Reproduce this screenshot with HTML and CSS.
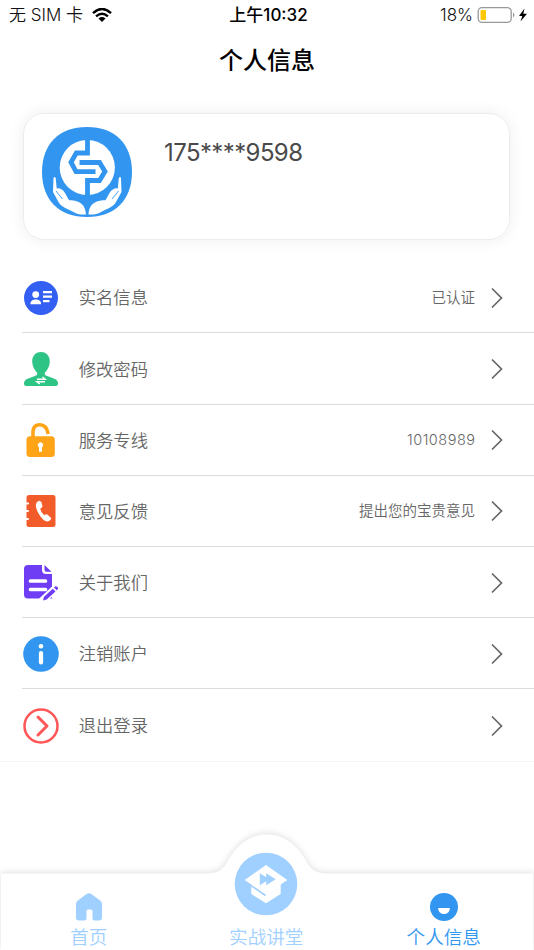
FILE: index.html
```html
<!DOCTYPE html>
<html lang="zh-CN">
<head>
  <meta charset="UTF-8">
  <meta name="viewport" content="width=device-width, initial-scale=1.0">
  <title>个人信息</title>
  <link rel="stylesheet" href="styles.css">
</head>
<body>
  <div class="status-bar">
    <div class="status-left">
      <span>无 SIM 卡</span>
      <svg class="wifi" viewBox="0 0 20 14">
        <path d="M1 5.1Q10-3.1 19 5.1M4.1 8.4q5.9-5.2 11.8 0" fill="none" stroke="#000" stroke-width="2.5"/>
        <path d="M6.5 10.5q3.5-2.8 7 0L10 14z"/>
      </svg>
    </div>
    <div class="status-time">上午10:32</div>
    <div class="status-right">
      <span>18%</span>
      <svg class="battery" viewBox="0 0 50 16">
        <rect x=".7" y=".7" width="33" height="14.6" rx="3.8" fill="#fff" stroke="#999" stroke-width="1.3"/>
        <rect x="3" y="3" width="5.5" height="10" rx="1" fill="#ffc800"/>
        <path d="M35.5 5.5q3 2.5 0 5z" fill="#999"/>
        <path d="M47 1.5l-5.5 7.5h3.3l-1.8 5.5 6.5-7.8h-3.7z"/>
      </svg>
    </div>
  </div>

  <h1>个人信息</h1>

  <section class="card">
    <svg class="logo" viewBox="0 0 90 90">
      <path d="M45 0C73 0 90 17 90 45S73 90 45 90 0 73 0 45 17 0 45 0z" fill="#3296f0"/>
      <circle cx="45.3" cy="40.5" r="27.6" fill="#fff"/>
      <path d="M45.5 12v14H34.3L29 35.2l5 9.500H53.5M45.5 69V53.5H57.5L63 44.500 57.5 35.5H37.5" fill="none" stroke="#3296f0" stroke-width="4.8"/>
      <g id="hand" fill="#fff">
        <path d="M11.5 51q.7-2 2.200 0l1 10.500q4.500-1 8.300 4.500l4 7.300c7 0 16.500 1.700 17 14.200-5 .3-9-.2-12.500-2.500-5-3-12-4.500-15-10l-5.500-10z"/>
        <path d="M14 64l6.500 8" fill="none" stroke="#3296f0" stroke-width=".9"/>
      </g>
      <use href="#hand" transform="translate(90.5) scale(-1 1)"/>
    </svg>
    <span class="phone">175****9598</span>
  </section>

  <ul class="menu">
    <li>
      <svg class="icon" viewBox="0 0 36 36">
        <circle cx="18" cy="18" r="17" fill="#335ff2"/>
        <g fill="#fff">
          <circle cx="12.7" cy="14.6" r="3.4"/>
          <path d="M7.5 24.3v-1c0-5.2 10.5-5.2 10.5 0v1z"/>
          <path d="M20 11h9v2.2h-9zM20 15.5h9v2.2h-9zM20 20h6.5v2.2H20z"/>
        </g>
      </svg>
      <span class="label">实名信息</span>
      <span class="value">已认证</span>
      <svg class="arrow" viewBox="0 0 12 22"><path d="M1 1.5L10.5 11 1 20.5"/></svg>
    </li>
    <li>
      <svg class="icon" viewBox="0 0 36 36">
        <path d="M18 1c6 0 9 4.500 8.800 10-.2 4.500-2.500 8-4.800 10.500-.8 1.800 0 2.500 1.500 3.200L32 28q3 1.500 3 4.500 0 2.500-2.500 2.500h-29Q1 35 1 32.500 1 29.500 4 28l8.500-3.300c1.500-.7 2.300-1.400 1.500-3.200-2.300-2.500-4.600-6-4.800-10.500C9 5.500 12 1 18 1z" fill="#2ec486"/>
        <path d="M14 28.200h8L19.500 26M22 30.800h-8l2.700 2.200" fill="none" stroke="#fff" stroke-width="1.5"/>
      </svg>
      <span class="label">修改密码</span>
      <svg class="arrow" viewBox="0 0 12 22"><path d="M1 1.5L10.5 11 1 20.5"/></svg>
    </li>
    <li>
      <svg class="icon" viewBox="0 0 36 36">
        <path d="M10 16V9.500Q10.500 2.800 17 2.800T25.200 12" fill="none" stroke="#ffa417" stroke-width="3.6"/>
        <rect x="3.5" y="14.3" width="28.3" height="20.7" rx="3.5" fill="#ffa417"/>
        <path d="M15.200 24.500a2.700 2.700 0 1 1 4.600 0l-.8 1v4.300h-3v-4.300z" fill="#fff"/>
      </svg>
      <span class="label">服务专线</span>
      <span class="value number">10108989</span>
      <svg class="arrow" viewBox="0 0 12 22"><path d="M1 1.5L10.5 11 1 20.5"/></svg>
    </li>
    <li>
      <svg class="icon" viewBox="0 0 36 36">
        <rect x="3.5" y="2" width="29" height="32" rx="2.5" fill="#f25c2a"/>
        <path d="M2.500 10.500h2.500M2.500 18h2.500M2.500 26h2.500" stroke="#fff" stroke-width="2" stroke-linecap="round"/>
        <path d="M13.500 9.700q3-3.700 5-.2l1 3.500q0 1.500-2.300 2.700.8 4 4 6.600 2.300-2 4 0l2.600 2.400q1.200 2-2.300 3.600-4.700 1-9.500-7-4.500-7.500-2.500-11.600z" fill="#fff"/>
      </svg>
      <span class="label">意见反馈</span>
      <span class="value">提出您的宝贵意见</span>
      <svg class="arrow" viewBox="0 0 12 22"><path d="M1 1.5L10.5 11 1 20.5"/></svg>
    </li>
    <li>
      <svg class="icon" viewBox="0 0 36 36">
        <path d="M5 0h14v5.5Q19.500 9 23 9h6v24.500H5Q1 33.500 1 29.500V4Q1 0 5 0zM21.500 0L28.500 6.800h-5q-2 0-2-2z" fill="#6f3df4"/>
        <path d="M7.500 16h15M7.500 24.500h15" stroke="#fff" stroke-width="3.7" stroke-linecap="round"/>
        <path d="M18 37L34 22" stroke="#fff" stroke-width="7.5"/>
        <path d="M20 35.500l1-3.800 8.800-8 2.700 2.800-8.800 8zM31 22.500l1.500-1.300q2.800.2 2.500 2.800l-1.400 1.300z" fill="#6f3df4"/>
      </svg>
      <span class="label">关于我们</span>
      <svg class="arrow" viewBox="0 0 12 22"><path d="M1 1.5L10.5 11 1 20.5"/></svg>
    </li>
    <li>
      <svg class="icon" viewBox="0 0 36 36">
        <circle cx="18" cy="18" r="17.8" fill="#3296f0"/>
        <circle cx="18" cy="10.2" r="2.3" fill="#fff"/>
        <path d="M18 17v9.500" stroke="#fff" stroke-width="4.2" stroke-linecap="round"/>
      </svg>
      <span class="label">注销账户</span>
      <svg class="arrow" viewBox="0 0 12 22"><path d="M1 1.5L10.5 11 1 20.5"/></svg>
    </li>
    <li>
      <svg class="icon" viewBox="0 0 36 36">
        <circle cx="18" cy="18" r="16.5" fill="none" stroke="#ff5757" stroke-width="2.5"/>
        <path d="M15 9l9 9-9 9" fill="none" stroke="#ff5757" stroke-width="3" stroke-linecap="round" stroke-linejoin="round"/>
      </svg>
      <span class="label">退出登录</span>
      <svg class="arrow" viewBox="0 0 12 22"><path d="M1 1.5L10.5 11 1 20.5"/></svg>
    </li>
  </ul>

  <nav class="tabbar">
    <svg class="tabbar-bg" viewBox="0 0 534 130">
      <path d="M1 53.500H207c10 0 15-3.500 19-9.500C238 22 252 14.500 267 14.500S296 22 308 44c4 6 9 9.500 19 9.500H533V140H1z"/>
    </svg>
    <a class="tab">
      <svg class="tab-home" viewBox="0 0 28 28">
        <path d="M12 .8q2-1.300 4 0l9.500 7Q27 9 27 11v13.500q0 3-3 3h-4.500q-2 0-2-2V18q0-1.500-1.500-1.500h-3q-1.500 0-1.500 1.500v7.500q0 2-2 2H4q-3 0-3-3V11Q1 9 2.500 7.800z" fill="#a0d0ff"/>
      </svg>
      <span>首页</span>
    </a>
    <a class="tab">
      <svg class="tab-course" viewBox="0 0 64 64">
        <circle cx="32" cy="32" r="31.3" fill="#a0d0ff"/>
        <path d="M32 13L53.300 28 46.700 32.500V42L32 51.300 17.300 42v-9.500L10.700 28z" fill="#fff"/>
        <path d="M16 32.800L31.500 43.500" stroke="#a0d0ff" stroke-width="1.6"/>
        <path d="M25.800 21.300l6.400 4v-4l9.500 6-9.500 6v-4l-6.400 4z" fill="#a0d0ff"/>
      </svg>
      <span>实战讲堂</span>
    </a>
    <a class="tab active">
      <svg class="tab-user" viewBox="0 0 28 28">
        <circle cx="14" cy="14" r="14" fill="#3296f0"/>
        <path d="M8.200 15h11.600c0 8-11.600 8-11.600 0z" fill="#fff"/>
      </svg>
      <span>个人信息</span>
    </a>
  </nav>
</body>
</html>
```
FILE: styles.css
```css
* {
  box-sizing: border-box;
}

body {
  margin: 0;
  height: 950px;
  display: flex;
  flex-direction: column;
  overflow: hidden;
  background-color: #fff;
  color: #666;
  font-family: Inter, "Noto Sans CJK SC", sans-serif;
}

svg {
  display: block;
  flex: none;
}

/* Status bar */
.status-bar {
  height: 30px;
  display: grid;
  grid-template-columns: 1fr auto 1fr;
  align-items: center;
  padding: 0 6px 0 9px;
  color: #111;
  font-size: 17px;
  font-weight: 350;
  line-height: 30px;
}

.status-left,
.status-right {
  display: flex;
  align-items: center;
}

.status-left {
  gap: 9px;
}

.status-right {
  justify-content: flex-end;
  gap: 4px;
}

.status-time {
  color: #000;
  font-weight: 500;
}

.wifi {
  width: 20px;
  height: 14px;
}

.battery {
  width: 51px;
  height: 16px;
}

h1 {
  margin: 0;
  padding-top: 1px;
  height: 61px;
  line-height: 60px;
  text-align: center;
  font-size: 24px;
  font-weight: 500;
  color: #000;
}

/* User card */
.card {
  display: flex;
  height: 127px;
  margin: 22px 24px 0 23px;
  padding: 13px 18px;
  border: 1px solid #ececec;
  border-radius: 21px;
  box-shadow: 0 0 16px rgba(0, 0, 0, 0.07);
}

.logo {
  width: 90px;
  height: 90px;
}

.phone {
  margin-left: 32px;
  line-height: 52px;
  font-size: 24px;
  letter-spacing: -0.6px;
  color: #4a4a4a;
}

/* Menu */
.menu {
  list-style: none;
  margin: 22px 0 0;
  padding: 0.3px 0 0 22px;
  border-bottom: 1px solid #f3f3f3;
}

.menu li {
  display: flex;
  align-items: center;
  height: 71.2px;
  padding: 1px 31px 0 0;
  border-bottom: 1px solid #dcdcdc;
}

.menu li:last-child {
  border-bottom: none;
}

.icon {
  width: 36px;
  height: 36px;
  margin-left: 0.5px;
}

.label {
  flex: 1;
  margin-left: 20.3px;
  font-size: 17.3px;
  font-weight: 350;
  line-height: 25px;
}

.value {
  font-size: 14.5px;
  font-weight: 350;
  line-height: 20px;
}

.value.number {
  letter-spacing: 0.5px;
  margin-right: -0.5px;
}

.arrow {
  width: 12px;
  height: 22px;
  margin-left: 16px;
  fill: none;
  stroke: #666;
  stroke-width: 1.7;
}

/* Bottom tabs */
.tabbar {
  position: relative;
  display: flex;
  height: 130px;
  margin-top: auto;
  padding-right: 1.5px;
}

.tabbar-bg {
  position: absolute;
  top: 0;
  left: 0;
  width: 534px;
  height: 130px;
  fill: #fff;
  filter: drop-shadow(0 -1px 3px rgba(0, 0, 0, 0.13));
}

.tab {
  position: relative;
  flex: 1;
  display: flex;
  flex-direction: column;
  align-items: center;
  justify-content: flex-end;
  color: #a0d0ff;
  font-size: 18.6px;
  font-weight: 350;
  line-height: 26px;
}

.tab.active {
  color: #3296f0;
}

.tab-home,
.tab-user {
  width: 28px;
  height: 28px;
  margin-bottom: 3px;
}

.tab-course {
  width: 64px;
  height: 64px;
  margin-bottom: 8px;
}
```
